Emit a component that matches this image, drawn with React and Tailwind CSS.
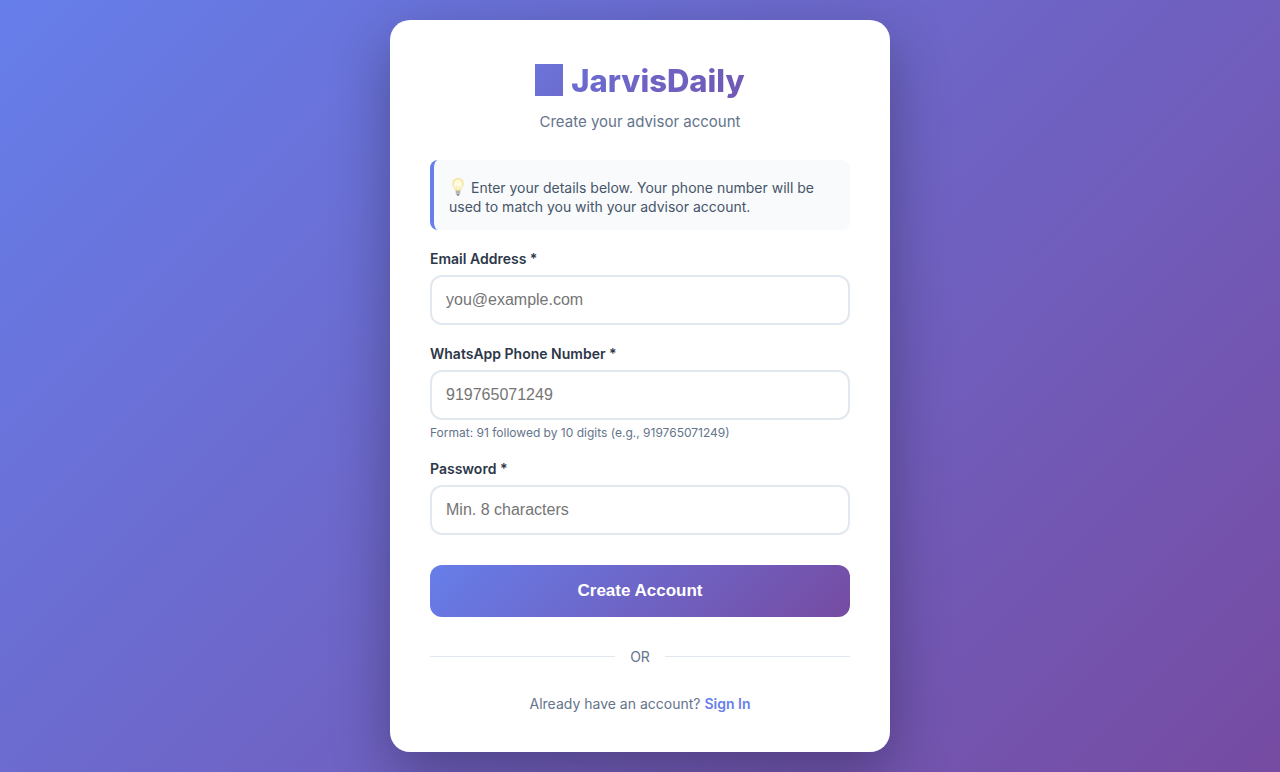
import React from 'react';

function Field({ id, label, hint, ...props }) {
  return (
    <div className="mb-5">
      <label htmlFor={id} className="mb-2 block text-[14px] leading-[17px] font-semibold text-[#2d3748]">
        {label}
      </label>
      <input
        id={id}
        className="block h-[50px] w-full rounded-xl border-2 border-[#e2e8f0] bg-white px-3.5 font-['Liberation_Sans',Arial,sans-serif] text-base text-[#1a202c] outline-none placeholder:text-[#757575] focus:border-[#667eea]"
        {...props}
      />
      {hint && <p className="mt-[5px] text-[12px] leading-[15px] text-[#64748b]">{hint}</p>}
    </div>
  );
}

function Bulb() {
  return (
    <svg viewBox="0 1 18 18" className="mr-1 inline-block size-[18px] align-[-3px]" aria-hidden="true">
      <defs>
        <radialGradient id="glass" cx="50%" cy="50%" r="55%">
          <stop offset="0" stopColor="#fffef2" />
          <stop offset="0.6" stopColor="#fff9d6" />
          <stop offset="1" stopColor="#f3dc83" />
        </radialGradient>
      </defs>
      <path d="M9 1.300c-3.300 0-5.300 2.300-5.300 5.200 0 3 2.400 4.300 2.900 7.300h4.800c.5-3 2.900-4.300 2.900-7.300 0-2.900-2-5.200-5.300-5.200z" fill="url(#glass)" stroke="#f0dc91" strokeWidth="0.6" />
      <path d="M7.900 13.500 7.400 9l.8.600.8-.6.8.6.8-.6-.5 4.500" fill="none" stroke="#efdc95" strokeWidth="0.4" />
      <path d="M6.800 13.800h4.400v3l-1.200 1.500H8l-1.200-1.500z" fill="#a3a3a3" />
      <path d="M6.800 15h4.400M7 16.500h4" stroke="#d8d8d8" strokeWidth="0.6" />
      <path d="M8 17.700h2l-.5 1h-1z" fill="#606060" />
    </svg>
  );
}

export default function App() {
  return (
    <div className="flex min-h-screen items-center justify-center bg-[linear-gradient(135deg,#667eea_0%,#764ba2_100%)] p-5 font-[Inter,sans-serif]">
      <main className="w-full max-w-[500px] rounded-[20px] bg-white p-10 shadow-[0_20px_60px_rgba(0,0,0,0.3)]">
        <header className="mb-[30px] text-center">
          <h1 className="flex h-10 items-start justify-center gap-2 bg-[linear-gradient(135deg,#667eea_0%,#764ba2_100%)] bg-clip-text text-[31px] leading-[42px] font-extrabold text-transparent">
            <span className="mt-1 h-8 w-7 bg-[linear-gradient(135deg,#6b75db,#6c6bcd)]" aria-hidden="true" />
            JarvisDaily
          </h1>
          <p className="mt-3.5 text-[15px] leading-4 text-[#64748b]">Create your advisor account</p>
        </header>

        <div className="mb-5 rounded-lg border-l-4 border-[#667eea] bg-[#f8fafc] px-[15px] pt-[18px] pb-3.5">
          <p className="text-[14px] leading-[19px] text-[#475569]">
            <Bulb />
            Enter your details below. Your phone number will be used to match you with your advisor account.
          </p>
        </div>

        <form onSubmit={(e) => e.preventDefault()}>
          <Field id="email" label="Email Address *" type="email" placeholder="you@example.com" />
          <Field
            id="phone"
            label="WhatsApp Phone Number *"
            type="tel"
            placeholder="919765071249"
            hint="Format: 91 followed by 10 digits (e.g., 919765071249)"
          />
          <Field id="password" label="Password *" type="password" placeholder="Min. 8 characters" />
          <button
            type="submit"
            className="mt-2.5 h-[52px] w-full cursor-pointer rounded-xl bg-[linear-gradient(135deg,#667eea_0%,#764ba2_100%)] font-['Liberation_Sans',Arial,sans-serif] text-[17px] font-bold text-white"
          >
            Create Account
          </button>
        </form>

        <div className="my-[30px] flex items-center gap-[15px] text-[14px] leading-[19px] text-[#64748b]">
          <span className="h-px flex-1 bg-[#e2e8f0]" />
          <span>OR</span>
          <span className="h-px flex-1 bg-[#e2e8f0]" />
        </div>

        <p className="text-center text-[14px] leading-4 text-[#64748b]">
          Already have an account?{' '}
          <a href="#signin" className="font-semibold text-[#667eea]">
            Sign In
          </a>
        </p>
      </main>
    </div>
  );
}
